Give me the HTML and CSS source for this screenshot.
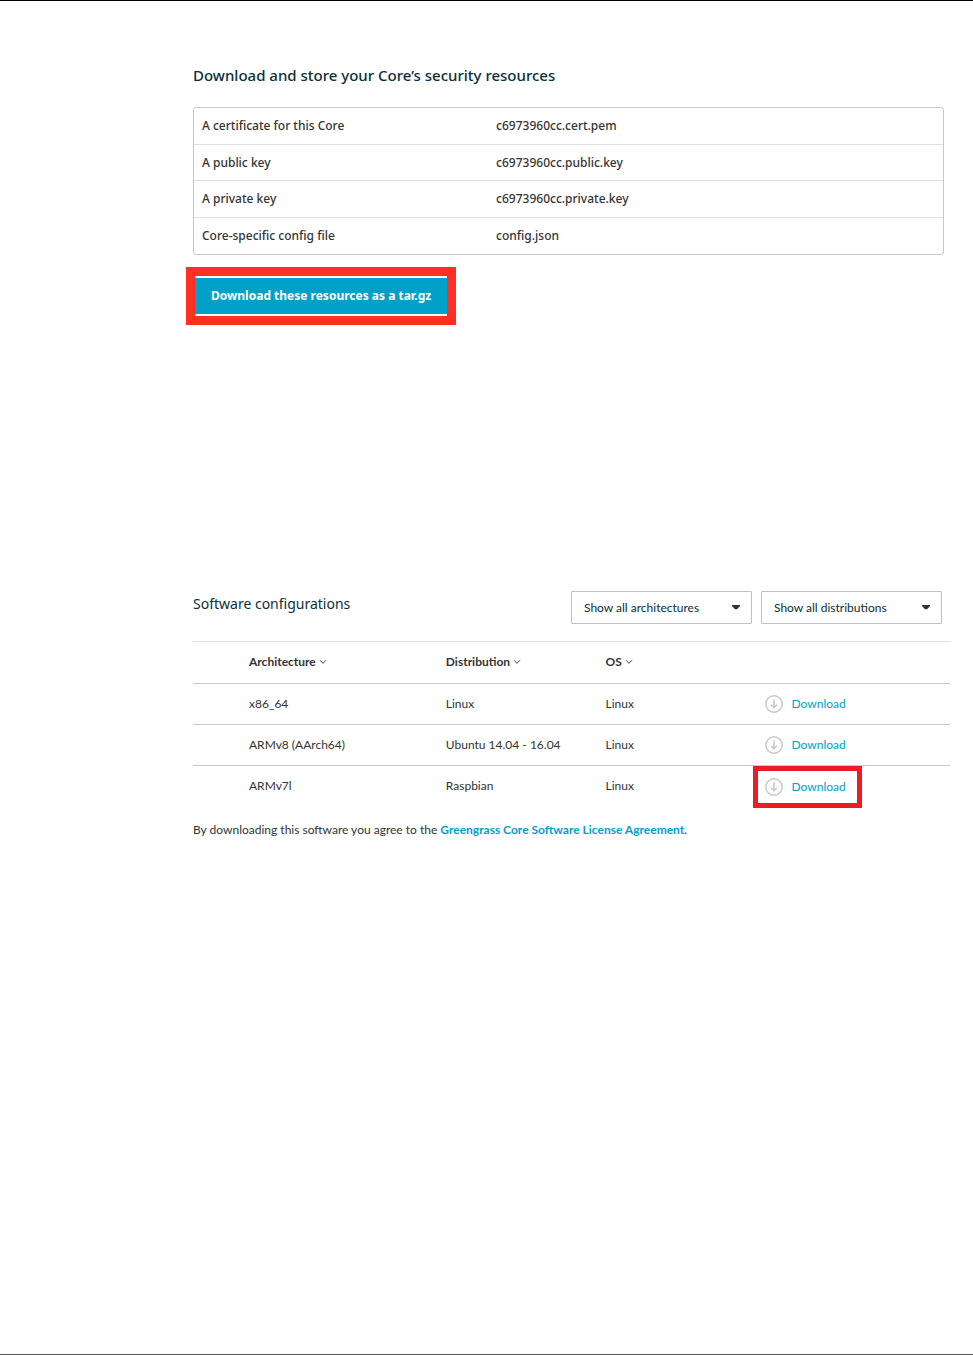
FILE: index.html
```html
<!DOCTYPE html>
<html lang="en">
<head>
<meta charset="utf-8">
<title>Core security resources</title>
<link rel="stylesheet" href="styles.css">
</head>
<body>
<svg class="sprite" aria-hidden="true">
  <symbol id="chevron" viewBox="0 0 8 6"><path d="M1 1.2 4 4.4 7 1.2" fill="none" stroke="#444" stroke-width="1"/></symbol>
  <symbol id="caret" viewBox="0 0 8 5"><path d="M0 0h8v1L5 4.3H3L0 1z" fill="#333"/></symbol>
  <symbol id="down" viewBox="0 0 18 18"><g fill="none" stroke="#c8c8c8"><circle cx="9" cy="9" r="8.2" stroke-width="1.5"/><path d="M9 4.5v8M6 9.7l3 3 3-3" stroke-width="1.6"/></g></symbol>
</svg>
<main class="page">
  <section class="resources">
    <h1 class="title title-strong">Download and store your Core’s security resources</h1>
    <div class="panel">
      <table class="files">
        <tbody>
          <tr><th scope="row">A certificate for this Core</th><td>c6973960cc.cert.pem</td></tr>
          <tr><th scope="row">A public key</th><td>c6973960cc.public.key</td></tr>
          <tr><th scope="row">A private key</th><td>c6973960cc.private.key</td></tr>
          <tr><th scope="row">Core-specific config file</th><td>config.json</td></tr>
        </tbody>
      </table>
    </div>
    <div class="callout"><button class="primary" type="button">Download these resources as a tar.gz</button></div>
  </section>

  <section class="software">
    <header class="toolbar">
      <h2 class="title">Software configurations</h2>
      <div class="filters">
        <div class="select">
          <select aria-label="Architecture filter"><option>Show all architectures</option></select>
          <svg class="caret" aria-hidden="true"><use href="#caret"/></svg>
        </div>
        <div class="select">
          <select aria-label="Distribution filter"><option>Show all distributions</option></select>
          <svg class="caret" aria-hidden="true"><use href="#caret"/></svg>
        </div>
      </div>
    </header>
    <table class="configs">
      <colgroup><col class="c-arch"><col class="c-dist"><col class="c-os"><col></colgroup>
      <thead>
        <tr>
          <th scope="col"><button class="sort" type="button">Architecture<svg class="chevron" aria-hidden="true"><use href="#chevron"/></svg></button></th>
          <th scope="col"><button class="sort" type="button">Distribution<svg class="chevron" aria-hidden="true"><use href="#chevron"/></svg></button></th>
          <th scope="col"><button class="sort" type="button">OS<svg class="chevron" aria-hidden="true"><use href="#chevron"/></svg></button></th>
          <td></td>
        </tr>
      </thead>
      <tbody>
        <tr><td>x86_64</td><td>Linux</td><td>Linux</td><td><a class="download" href="#"><svg class="down" aria-hidden="true"><use href="#down"/></svg>Download</a></td></tr>
        <tr><td>ARMv8 (AArch64)</td><td>Ubuntu 14.04 - 16.04</td><td>Linux</td><td><a class="download" href="#"><svg class="down" aria-hidden="true"><use href="#down"/></svg>Download</a></td></tr>
        <tr><td>ARMv7l</td><td>Raspbian</td><td>Linux</td><td><a class="download marked" href="#"><svg class="down" aria-hidden="true"><use href="#down"/></svg>Download</a></td></tr>
      </tbody>
    </table>
    <p class="license">By downloading this software you agree to the <a href="#">Greengrass Core Software License Agreement</a>.</p>
  </section>
</main>
</body>
</html>
```
FILE: styles.css
```css
* { box-sizing: border-box; }

body {
  margin: 0;
  background: #fff;
  color: #333;
  font: 12px/20px "Noto Sans", "Open Sans", sans-serif;
}

.sprite { position: absolute; width: 0; height: 0; }

.page {
  min-height: 100vh;
  padding: 63px 23px 0 193px;
  border-top: 1px solid #000;
  border-bottom: 1px solid #555;
}

.title {
  margin: 0;
  color: #0b2f3a;
  font: 400 14px/22px "Noto Sans", "Open Sans", sans-serif;
}
.title-strong { font-size: 15px; font-weight: 500; }

.panel {
  margin: 21px 6px 0 0;
  border: 1px solid #c8c8c8;
  border-radius: 3px;
}

table { width: 100%; border-collapse: collapse; table-layout: fixed; }
th, td { padding: 0; text-align: left; font-weight: 400; }

.files { height: 146px; }
.files th, .files td { padding-left: 8px; font-weight: 500; }
.files th { width: 39%; }
.files td { padding-left: 10px; }
.files tr + tr { border-top: 1px solid #e1e1e1; }

.callout {
  width: fit-content;
  margin: 12px 0 0 -7px;
  padding: 2px 0;
  border: 9px solid #ff3021;
}
.primary {
  display: block;
  height: 36px;
  padding: 0 16px;
  border: 0;
  background: #00a1c9;
  color: #fff;
  font: inherit;
  font-weight: 700;
}

.software {
  margin-top: 266px;
  font-family: Lato, "Noto Sans", sans-serif;
}

.toolbar {
  display: flex;
  justify-content: space-between;
  align-items: flex-start;
  padding: 0 8px 17px 0;
}
.toolbar .title { margin-top: 2px; }
.filters { display: flex; gap: 9px; }

.select { position: relative; width: 181px; }
.select select {
  width: 100%;
  height: 33px;
  padding: 0 12px;
  border: 1px solid #c0c0c0;
  border-radius: 1px;
  appearance: none;
  background: #fff;
  color: #0b2f3a;
  font: inherit;
}
.caret {
  position: absolute;
  top: 14px;
  right: 12px;
  width: 8px;
  height: 5px;
  pointer-events: none;
}

.configs tr { border-top: 1px solid #c8c8c8; }
.configs thead tr { border-top-color: #e1e1e1; }
.configs th, .configs td { height: 41px; }
.configs thead th { height: 42px; padding-bottom: 2px; }
.configs th:first-child, .configs td:first-child { padding-left: 56px; }
.c-arch { width: 33.4%; }
.c-dist { width: 21.1%; }
.c-os { width: 21%; }

.sort {
  display: flex;
  align-items: center;
  gap: 3px;
  padding: 0;
  border: 0;
  background: none;
  color: inherit;
  font: inherit;
  font-weight: 700;
}
.chevron { width: 8px; height: 6px; }

a { color: #00a1c9; text-decoration: none; }
.download {
  position: relative;
  display: inline-flex;
  align-items: center;
  gap: 9px;
  vertical-align: middle;
}
.down { width: 18px; height: 18px; }
.marked::after {
  content: "";
  position: absolute;
  inset: -11px -16px;
  left: -12px;
  border: 5px solid #ed1c24;
}

.license { margin: 13px 0 0; }
.license a { font-weight: 700; }
```
